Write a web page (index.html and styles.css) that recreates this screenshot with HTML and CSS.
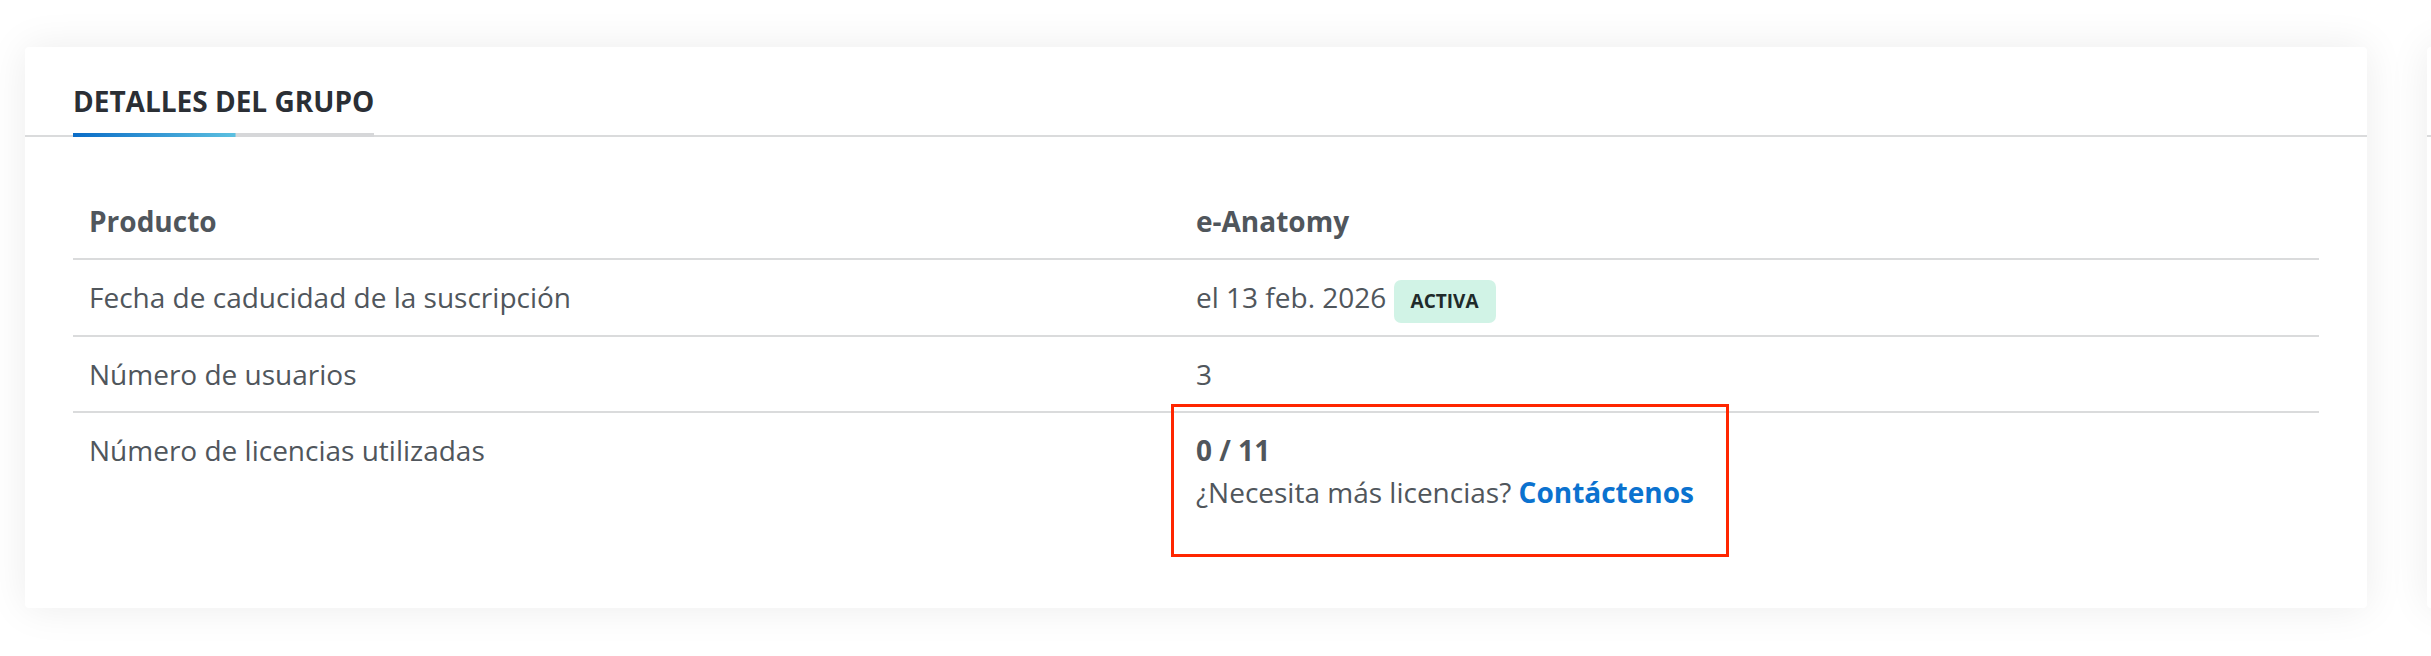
FILE: index.html
```html
<html lang="es"><head>
    <meta charset="UTF-8">
    <meta name="viewport" content="width=device-width, initial-scale=1.0">
    <title>Detalles del grupo</title>
    <link rel="stylesheet" href="styles.css">
</head>
<body>
    <div class="board">
        <div class="card">
            <div class="card_head">
                <div class="tab">DETALLES DEL GRUPO</div>
            </div>
            <div class="details">
                <div class="row row_head">
                    <div class="cell">Producto</div>
                    <div class="cell">e-Anatomy</div>
                </div>
                <div class="row">
                    <div class="cell">Fecha de caducidad de la suscripción</div>
                    <div class="cell">el 13 feb. 2026 <span class="badge">ACTIVA</span></div>
                </div>
                <div class="row">
                    <div class="cell">Número de usuarios</div>
                    <div class="cell">3</div>
                </div>
                <div class="row">
                    <div class="cell">Número de licencias utilizadas</div>
                    <div class="cell cell_mark">
                        <div class="count">0 / 11</div>
                        <div>¿Necesita más licencias? <a class="link" href="#">Contáctenos</a></div>
                        <div class="mark"></div>
                    </div>
                </div>
            </div>
        </div>
        <!-- la tarjeta siguiente, cortada por el borde -->
        <div class="card card_next">
            <div class="card_head"></div>
        </div>
    </div>
</body></html>
```

FILE: styles.css
```css
body {
    margin: 0;
    background: #fff;
    overflow: hidden;
    font-family: "Open Sans", "Liberation Sans", sans-serif;
    color: #50565c;
}
.board {
    display: flex;
    gap: 60px;
    padding: 47px 0 0 25px;
    height: 609px;
}
.card {
    flex: 0 0 2342px;
    height: 561px;
    background: #fff;
    border-radius: 4px;
    box-shadow: 0 0 40px rgba(0, 0, 0, 0.08);
}
.card_next {
    flex: 0 0 600px;
}
.card_head {
    padding: 35px 48px 0 48px;
    border-bottom: 2px solid #dadbdc;
}
.card_next .card_head {
    height: 53px;
    padding: 35px 0 0 0;
}
.tab {
    display: inline-block;
    font-size: 28px;
    line-height: 38px;
    font-weight: 700;
    color: #2b2f35;
    margin-bottom: -2px;   /* la línea de la pestaña tapa la del encabezado */
    vertical-align: top;
}
.tab::after {
    content: "";
    display: block;
    height: 4px;
    margin-top: 13px;
    background: linear-gradient(90deg, #0a6cc7, #5cc0e0) no-repeat 0 0 / 54% 100%, #d6d7d9;
}
.details {
    margin: 47px 48px 0 48px;
    font-size: 28px;
    line-height: 42px;
}
.row {
    display: grid;
    grid-template-columns: 1107px 1fr;
    border-bottom: 2px solid #dadbdc;
}
.row:last-child {
    border-bottom: none;
}
.cell {
    padding: 16px;
}
.row_head .cell {
    font-weight: 700;
}
.badge {
    display: inline-block;
    margin-bottom: -4px;
    padding: 8px 17px;
    font-size: 19px;
    line-height: 27px;
    font-weight: 700;
    color: #1f2a2a;
    background: #d1f3e6;
    border-radius: 7px;
}
.count {
    font-weight: 700;
}
.link {
    color: #0b72cf;
    font-weight: 700;
    text-decoration: none;
}
.cell_mark {
    position: relative;
}
/* recuadro rojo de anotación encima del contenido */
.mark {
    position: absolute;
    left: -9px;
    top: -9px;
    width: 552px;
    height: 147px;
    border: 3px solid #ff2600;
}
```
